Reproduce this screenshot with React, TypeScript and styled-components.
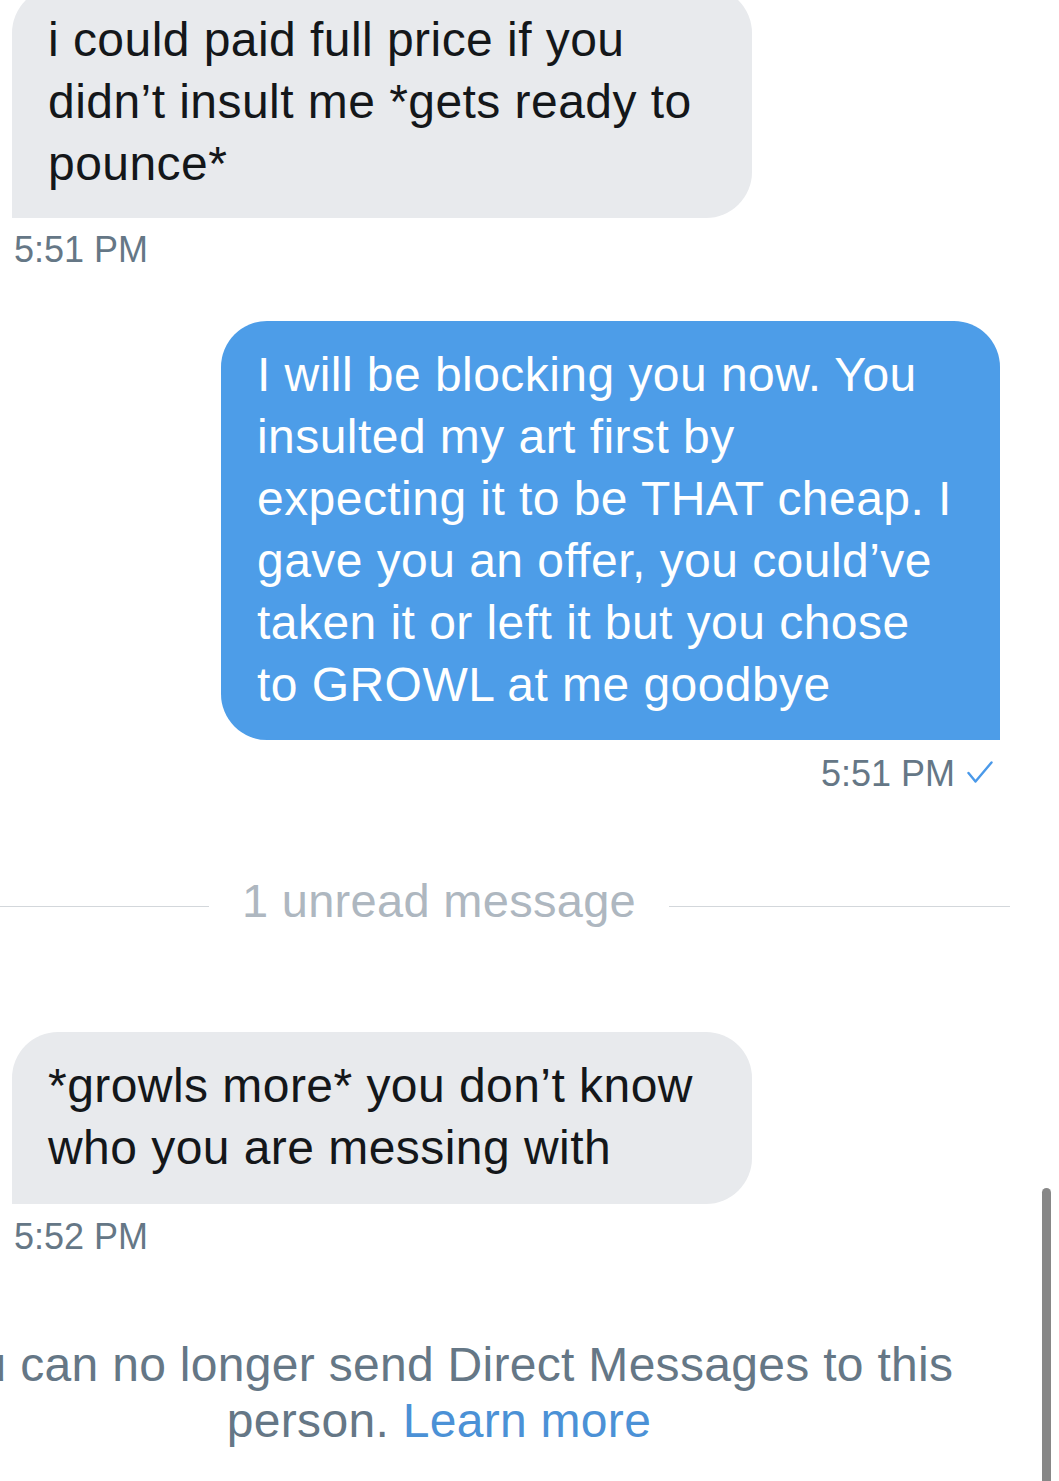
import React from "react";
import styled, { createGlobalStyle } from "styled-components";

const GlobalStyle = createGlobalStyle`
  html, body {
    margin: 0;
    padding: 0;
    background: #ffffff;
    overflow: hidden;
  }
  body {
    font-family: "Liberation Sans", Arial, Helvetica, sans-serif;
    -webkit-font-smoothing: antialiased;
  }
`;

const Screen = styled.div`
  position: relative;
  width: 1059px;
  height: 1481px;
  overflow: hidden;
  background: #ffffff;
`;

const Thread = styled.div`
  display: flex;
  flex-direction: column;
  padding: 0 59px 0 12px;
`;

const Bubble = styled.div<{ $outgoing?: boolean; $top?: number }>`
  box-sizing: border-box;
  width: ${(p) => (p.$outgoing ? "779px" : "740px")};
  align-self: ${(p) => (p.$outgoing ? "flex-end" : "flex-start")};
  margin-top: ${(p) => p.$top ?? 0}px;
  padding: 22px 36px 23px;
  background: ${(p) => (p.$outgoing ? "#4d9de8" : "#e8eaed")};
  color: ${(p) => (p.$outgoing ? "#ffffff" : "#14171a")};
  border-radius: ${(p) => (p.$outgoing ? "46px 46px 0 46px" : "46px 46px 46px 0")};
  font-size: 48px;
  line-height: 62px;
  letter-spacing: 0.45px;
  white-space: nowrap;
`;

const Line = styled.span`
  display: block;
`;

const Stamp = styled.div<{ $outgoing?: boolean; $top?: number }>`
  display: flex;
  align-items: center;
  justify-content: ${(p) => (p.$outgoing ? "flex-end" : "flex-start")};
  gap: 12px;
  margin-top: ${(p) => p.$top ?? 10}px;
  padding: ${(p) => (p.$outgoing ? "0 7px 0 0" : "0 0 0 2px")};
  font-size: 36px;
  line-height: 44px;
  color: #657786;
`;

const Check = styled.svg`
  width: 26px;
  height: 22px;
  margin-top: -4px;
  flex: none;
`;

const Divider = styled.div`
  display: flex;
  align-items: flex-start;
  gap: 33px;
  width: 1142px;
  margin: 77px 0 0 -144px;
`;

const Rule = styled.div`
  flex: 1;
  height: 1px;
  margin-top: 33px;
  background: #d3d7db;
`;

const DividerText = styled.div`
  font-size: 47px;
  line-height: 56px;
  color: #aeb7c0;
  letter-spacing: 0.3px;
  white-space: nowrap;
`;

const Notice = styled.div`
  width: 1142px;
  margin: 78px 0 0 -144px;
  text-align: center;
  font-size: 48px;
  line-height: 56px;
  letter-spacing: 0.3px;
  color: #657786;
  white-space: nowrap;
`;

const LearnMore = styled.span`
  color: #4b91d6;
`;

const ScrollThumb = styled.div`
  position: absolute;
  top: 1188px;
  right: 8px;
  width: 9px;
  bottom: 0;
  border-radius: 5px 5px 0 0;
  background: #878787;
`;

const CheckIcon = () => (
  <Check viewBox="0 0 26 22" fill="none">
    <polyline
      points="1.5,12 8.5,20.5 24.5,1.5"
      stroke="#4a99e9"
      strokeWidth="2.4"
      strokeLinecap="round"
      strokeLinejoin="round"
    />
  </Check>
);

export default function App() {
  return (
    <>
      <GlobalStyle />
      <Screen>
        <Thread>
          <Bubble $top={-13}>
            <Line>i could paid full price if you</Line>
            <Line>didn’t insult me *gets ready to</Line>
            <Line>pounce*</Line>
          </Bubble>
          <Stamp>5:51 PM</Stamp>

          <Bubble $outgoing $top={49} style={{ paddingBottom: 24, paddingTop: 23 }}>
            <Line>I will be blocking you now. You</Line>
            <Line>insulted my art first by</Line>
            <Line>expecting it to be THAT cheap. I</Line>
            <Line>gave you an offer, you could’ve</Line>
            <Line>taken it or left it but you chose</Line>
            <Line>to GROWL at me goodbye</Line>
          </Bubble>
          <Stamp $outgoing $top={12}>
            <span>5:51 PM</span>
            <CheckIcon />
          </Stamp>

          <Divider>
            <Rule />
            <DividerText>1 unread message</DividerText>
            <Rule />
          </Divider>

          <Bubble $top={103} style={{ paddingTop: 23, paddingBottom: 25 }}>
            <Line>*growls more* you don’t know</Line>
            <Line>who you are messing with</Line>
          </Bubble>
          <Stamp $top={11}>5:52 PM</Stamp>

          <Notice>
            You can no longer send Direct Messages to this
            <br />
            person. <LearnMore>Learn more</LearnMore>
          </Notice>
        </Thread>
        <ScrollThumb />
      </Screen>
    </>
  );
}
